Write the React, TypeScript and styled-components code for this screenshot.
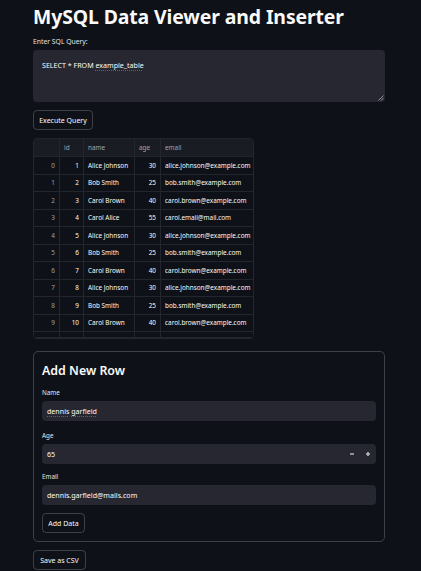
import React from "react";
import styled, { createGlobalStyle } from "styled-components";

const Global = createGlobalStyle`
  html, body { margin: 0; padding: 0; background: #0e1117; }
  body { font-family: "Noto Sans", "Open Sans", sans-serif; color: #fafafa; }
  * { box-sizing: border-box; }
`;

const Page = styled.main`
  width: 421px;
  min-height: 571px;
  padding: 0 36px 0 33px;
  display: flex;
  flex-direction: column;
`;

const Title = styled.h1`
  margin: 0;
  height: 35px;
  display: flex;
  align-items: center;
  padding-bottom: 3px;
  font-size: 19.4px;
  font-weight: 700;
  letter-spacing: -0.1px;
  color: #fafafa;
`;

const Label = styled.div`
  font-size: 6.8px;
  line-height: 10px;
  height: 10px;
  color: #e6e6e8;
  margin: 2px 0 3px;
`;

const TextArea = styled.div`
  position: relative;
  height: 52px;
  background: #262730;
  border-radius: 4px;
  padding: 10px 9px;
  font-size: 7.1px;
  line-height: 10px;
  color: #fafafa;
`;

const Resize = styled.svg`
  position: absolute;
  right: 1px;
  bottom: 1px;
`;

const Misspelled = styled.span`
  text-decoration: underline dotted #d2333b;
  text-decoration-thickness: 1px;
  text-underline-offset: 1.5px;
`;

const Button = styled.button<{ $w: number }>`
  width: ${(p) => p.$w}px;
  height: 20px;
  padding: 0;
  background: transparent;
  border: 1px solid rgba(250, 250, 250, 0.2);
  border-radius: 4px;
  color: #fafafa;
  font-family: inherit;
  font-size: 7px;
  display: flex;
  align-items: center;
  justify-content: center;
`;

const Gap = styled.div<{ $h: number }>`
  height: ${(p) => p.$h}px;
  flex: none;
`;

const Table = styled.div`
  width: 221px;
  border: 1px solid #24262d;
  border-radius: 4px;
  overflow: hidden;
  display: grid;
  grid-template-columns: 26px 24px 51px 26px 92px;
  font-size: 6.4px;
`;

const Cell = styled.div<{ $head?: boolean; $right?: boolean; $dim?: boolean; $h?: number; $last?: boolean }>`
  height: ${(p) => p.$h ?? 17.5}px;
  display: flex;
  align-items: center;
  justify-content: ${(p) => (p.$right ? "flex-end" : "flex-start")};
  padding: 0 4px;
  white-space: nowrap;
  overflow: hidden;
  background: ${(p) => (p.$head ? "#1a1c23" : "#0e1117")};
  color: ${(p) => (p.$dim || p.$head ? "rgba(250,250,250,0.6)" : "#fafafa")};
  border-right: ${(p) => (p.$last ? "none" : "1px solid #24262d")};
  border-bottom: 1px solid #24262d;
`;

const Form = styled.section`
  border: 1px solid rgba(250, 250, 250, 0.2);
  border-radius: 5px;
  padding: 0 8px 8px;
  display: flex;
  flex-direction: column;
`;

const FormTitle = styled.h3`
  margin: 0;
  height: 34px;
  display: flex;
  align-items: center;
  padding-top: 3px;
  font-size: 12.4px;
  font-weight: 600;
  color: #fafafa;
`;

const FieldLabel = styled.div`
  font-size: 6.3px;
  height: 12px;
  display: flex;
  align-items: center;
  color: #e6e6e8;
`;

const Input = styled.div<{ $stepper?: boolean }>`
  height: 20px;
  background: #262730;
  border-radius: 4px;
  padding: ${(p) => (p.$stepper ? "0 0 0 5px" : "0 5px")};
  display: flex;
  align-items: center;
  font-size: 7.1px;
  color: #fafafa;
`;

const InputText = styled.span`
  flex: 1;
`;

const Step = styled.span`
  width: 16px;
  height: 20px;
  display: flex;
  align-items: center;
  justify-content: center;
`;

const rows = [
  [1, "Alice Johnson", 30, "alice.johnson@example.com"],
  [2, "Bob Smith", 25, "bob.smith@example.com"],
  [3, "Carol Brown", 40, "carol.brown@example.com"],
  [4, "Carol Alice", 55, "carol.email@mail.com"],
  [5, "Alice Johnson", 30, "alice.johnson@example.com"],
  [6, "Bob Smith", 25, "bob.smith@example.com"],
  [7, "Carol Brown", 40, "carol.brown@example.com"],
  [8, "Alice Johnson", 30, "alice.johnson@example.com"],
  [9, "Bob Smith", 25, "bob.smith@example.com"],
  [10, "Carol Brown", 40, "carol.brown@example.com"],
] as const;

export default function App() {
  return (
    <Page>
      <Global />
      <Title>MySQL Data Viewer and Inserter</Title>
      <Label>Enter SQL Query:</Label>
      <TextArea>
        SELECT * FROM <Misspelled>example_table</Misspelled>
        <Resize width="6" height="6" viewBox="0 0 6 6">
          <path d="M5.5 0.5 L0.5 5.5 M5.5 3 L3 5.5" stroke="#aaa" strokeWidth="0.8" />
        </Resize>
      </TextArea>
      <Gap $h={8} />
      <Button $w={60}>Execute Query</Button>
      <Gap $h={8} />
      <Table>
        <Cell $head $h={18} />
        <Cell $head $h={18}>id</Cell>
        <Cell $head $h={18}>name</Cell>
        <Cell $head $h={18}>age</Cell>
        <Cell $head $h={18} $last>email</Cell>
        {rows.map((r, i) => (
          <React.Fragment key={i}>
            <Cell $right $dim>{i}</Cell>
            <Cell $right>{r[0]}</Cell>
            <Cell>{r[1]}</Cell>
            <Cell $right>{r[2]}</Cell>
            <Cell $last>{r[3]}</Cell>
          </React.Fragment>
        ))}
        <Cell $h={6} />
        <Cell $h={6} />
        <Cell $h={6} />
        <Cell $h={6} />
        <Cell $h={6} $last />
      </Table>
      <Gap $h={12} />
      <Form>
        <FormTitle>Add New Row</FormTitle>
        <FieldLabel>Name</FieldLabel>
        <Gap $h={3} />
        <Input>
          <InputText>
            <Misspelled>dennis</Misspelled> <Misspelled>garfield</Misspelled>
          </InputText>
        </Input>
        <Gap $h={8} />
        <FieldLabel>Age</FieldLabel>
        <Gap $h={3} />
        <Input $stepper>
          <InputText>65</InputText>
          <Step>
            <svg width="4" height="2" viewBox="0 0 4 2"><rect width="4" height="2" fill="#8e9096" /></svg>
          </Step>
          <Step>
            <svg width="4" height="4" viewBox="0 0 4 4"><path d="M1.2 0h1.6v1.2H4v1.6H2.8V4H1.2V2.8H0V1.2h1.2z" fill="#b8b9bd" /></svg>
          </Step>
        </Input>
        <Gap $h={6} />
        <FieldLabel>Email</FieldLabel>
        <Gap $h={3} />
        <Input>
          <InputText>dennis.garfield@mails.com</InputText>
        </Input>
        <Gap $h={8} />
        <Button $w={43}>Add Data</Button>
      </Form>
      <Gap $h={8} />
      <Button $w={53}>Save as CSV</Button>
    </Page>
  );
}
